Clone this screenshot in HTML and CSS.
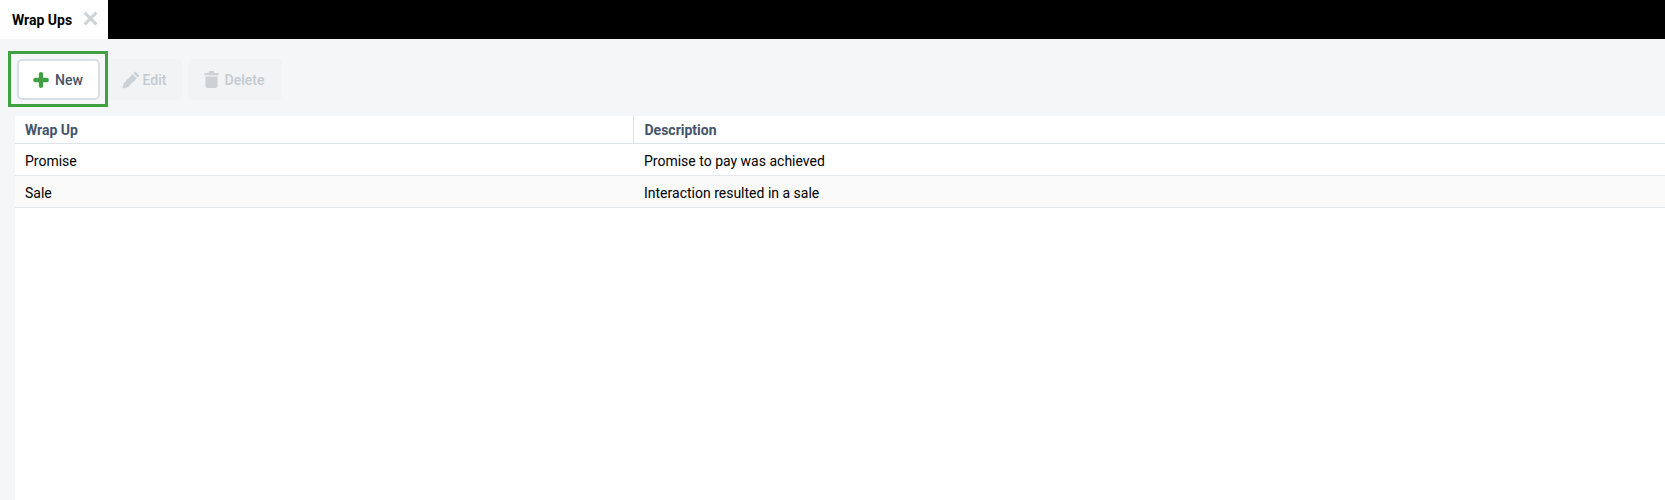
FILE: index.html
```html
<!DOCTYPE html>
<html lang="en">
<head>
    <meta charset="UTF-8">
    <title>Wrap Ups</title>
    <link rel="stylesheet" href="styles.css">
</head>
<body>
    <div class="tabbar">
        <div class="tab">
            <span class="tab-title">Wrap Ups</span>
            <svg class="tab-close" viewBox="0 0 14 14"><path d="M1.5 1.5 L12.5 12.5 M12.5 1.5 L1.5 12.5"/></svg>
        </div>
    </div>
    <div class="toolbar">
        <div class="highlight">
            <button class="btn btn-new">
                <svg class="icon icon-plus" viewBox="0 0 14 14"><path class="plus" d="M7 2 V12 M2 7 H12"/></svg>
                New
            </button>
        </div>
        <button class="btn btn-edit" disabled>
            <svg class="icon icon-edit" viewBox="0 0 16 16"><path class="solid" d="M11.8 0.5 L15.5 4.2 L13.9 5.8 L10.2 2.1 Z M9.4 2.9 L13.1 6.6 L5.2 14.5 L0.5 15.5 L1.5 10.8 Z"/></svg>
            Edit
        </button>
        <button class="btn btn-delete" disabled>
            <svg class="icon icon-delete" viewBox="0 0 14 16"><path class="solid" d="M5 0 H9 L9.7 1.8 H13.7 V4 H0.3 V1.8 H4.3 Z M1.3 5.2 H12.7 V14.2 C12.7 15.2 12.2 16 11.2 16 H2.8 C1.8 16 1.3 15.2 1.3 14.2 Z"/></svg>
            Delete
        </button>
    </div>
    <div class="content">
        <table class="grid">
            <thead>
                <tr><th class="col-name">Wrap Up</th><th class="col-desc">Description</th></tr>
            </thead>
            <tbody>
                <tr><td>Promise</td><td class="col-desc">Promise to pay was achieved</td></tr>
                <tr class="alt"><td>Sale</td><td class="col-desc">Interaction resulted in a sale</td></tr>
            </tbody>
        </table>
    </div>
</body>
</html>
```

FILE: styles.css
```css
html, body {
    height: 100%;
}

body {
    margin: 0;
    display: flex;
    flex-direction: column;
    overflow: hidden;
    background-color: #f5f6f8;
    font-family: 'Roboto', 'Liberation Sans', sans-serif;
    font-size: 14px;
    color: #000;
}

.tabbar {
    display: flex;
    height: 39px;
    background-color: #000;
}

.tab {
    display: flex;
    align-items: center;
    gap: 11px;
    width: 108px;
    box-sizing: border-box;
    padding-left: 12px;
    background-color: #fff;
}

.tab-title {
    font-weight: 700;
    font-size: 14px;
}

.tab-close {
    width: 15px;
    height: 15px;
    margin-top: -2px;
    fill: none;
    stroke: #ced3d6;
    stroke-width: 2.8;
}

.toolbar {
    display: flex;
    align-items: flex-start;
    height: 77px;
    box-sizing: border-box;
    padding: 12px 0 0 8px;
}

.highlight {
    display: flex;
    width: 100px;
    height: 56px;
    box-sizing: border-box;
    padding: 5px 5px 4px 6px;
    border: 3px solid #3fa142;
}

.btn {
    display: flex;
    align-items: center;
    justify-content: center;
    height: 41px;
    box-sizing: border-box;
    padding: 0;
    border: 2px solid transparent;
    border-radius: 5px;
    background-color: #f2f3f5;
    font-family: inherit;
    font-size: 14px;
    font-weight: 500;
    color: #c3cad0;
}

.btn-new {
    width: 83px;
    gap: 6px;
    padding-right: 1px;
    border-color: #d8e0e6;
    background-color: #fff;
    color: #44546a;
}

.btn-edit {
    width: 74px;
    gap: 3px;
    padding-right: 2px;
    margin: 8px 6px 0 0;
}

.btn-delete {
    width: 94px;
    gap: 6px;
    padding-right: 2px;
    margin-top: 8px;
}

.icon-plus {
    width: 16px;
    height: 16px;
}

.icon-edit {
    width: 18px;
    height: 18px;
}

.icon-delete {
    width: 15px;
    height: 17px;
}

.plus {
    fill: none;
    stroke: #3fa142;
    stroke-width: 3.8;
    stroke-linecap: round;
}

.solid {
    fill: #ccd1d6;
}

.content {
    flex: 1;
    margin-left: 15px;
    background-color: #fff;
}

.grid {
    width: 100%;
    border-collapse: collapse;
    table-layout: fixed;
}

.grid th {
    height: 27px;
    box-sizing: border-box;
    padding: 2px 10px 0;
    text-align: left;
    font-size: 14px;
    font-weight: 700;
    color: #44546a;
    border-bottom: 1px solid #dde3e8;
}

.grid .col-name {
    width: 618px;
    border-right: 1px solid #dde3e8;
}

.grid td {
    height: 32px;
    padding: 3px 10px 0;
    box-sizing: border-box;
    border-bottom: 1px solid #e4e8eb;
}

.grid .col-desc {
    padding-left: 11px;
}

.alt td {
    background-color: #fafafa;
}
```
